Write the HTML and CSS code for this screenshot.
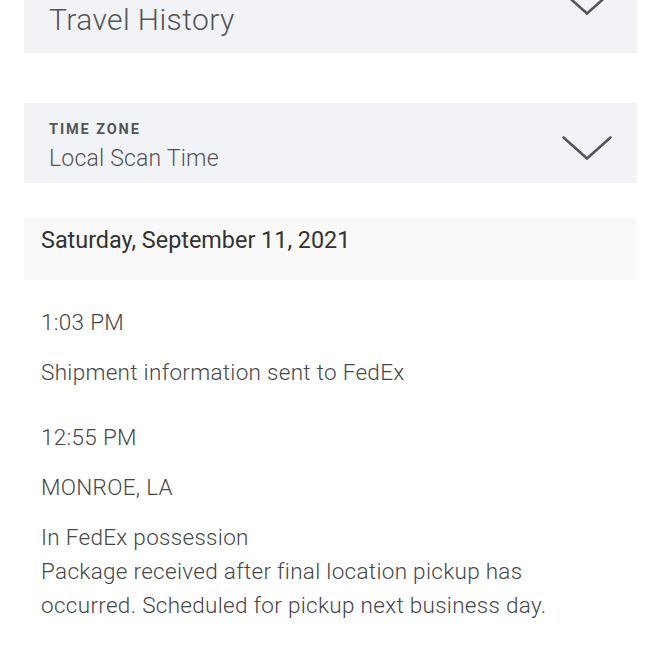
FILE: index.html
```html
<!DOCTYPE html>
<html>
<head>
<meta charset="utf-8">
<link rel="stylesheet" href="styles.css">
</head>
<body>
<div class="page">
  <div class="select select-top">
    <div class="select-text">
      <div class="value value-lg">Travel History</div>
    </div>
    <svg class="chevron chevron-top" width="50" height="24" viewBox="0 0 50 24"><polyline points="1.5,1.5 25,22.5 48.5,1.5" fill="none" stroke="#555" stroke-width="2.6" stroke-linecap="round" stroke-linejoin="miter"/></svg>
  </div>

  <div class="select select-tz">
    <div class="select-text">
      <div class="label">TIME ZONE</div>
      <div class="value value-tz">Local Scan Time</div>
    </div>
    <svg class="chevron chevron-tz" width="50" height="24" viewBox="0 0 50 24"><polyline points="1.5,1.5 25,22.5 48.5,1.5" fill="none" stroke="#555" stroke-width="2.6" stroke-linecap="round" stroke-linejoin="miter"/></svg>
  </div>

  <div class="day-header">Saturday, September 11, 2021</div>

  <div class="events">
    <div class="event">
      <div class="line">1:03 PM</div>
      <div class="line">Shipment information sent to FedEx</div>
    </div>
    <div class="event">
      <div class="line">12:55 PM</div>
      <div class="line">MONROE, LA</div>
      <div class="desc">
        <div class="line">In FedEx possession</div>
        <div class="line">Package received after final location pickup has occurred. Scheduled for pickup next business day.</div>
      </div>
    </div>
  </div>
</div>
</body>
</html>
```
FILE: styles.css
```css
html, body {
  margin: 0;
  padding: 0;
  background: #ffffff;
}
body {
  font-family: Roboto, "Liberation Sans", sans-serif;
  color: #474747;
  overflow: hidden;
}
.page {
  width: 613px;
  margin-left: 24px;
}
.select {
  background: #f2f3f6;
  display: flex;
  justify-content: space-between;
  align-items: flex-start;
  box-sizing: border-box;
}
.select-top {
  margin-top: -30px;
  height: 83.3px;
  padding: 32px 25px 0 25px;
}
.chevron-top {
  margin-top: -11.5px;
}
.select-tz {
  margin-top: 49.7px;
  height: 80px;
  padding: 18.3px 25px 0 25px;
}
.chevron-tz {
  margin-top: 14.5px;
}
.label {
  font-size: 14.5px;
  line-height: 18px;
  font-weight: 700;
  letter-spacing: 1.9px;
  color: #555555;
}
.value {
  font-weight: 300;
  color: #555555;
}
.value-tz {
  margin-top: 6px;
  font-size: 23px;
  line-height: 28px;
  letter-spacing: 0.2px;
}
.value-lg {
  font-size: 30px;
  line-height: 36px;
  letter-spacing: 0.4px;
}
.day-header {
  margin-top: 34.5px;
  height: 62.5px;
  box-sizing: border-box;
  background: #f9f9f9;
  padding: 7.5px 17px 0 17px;
  font-size: 23.4px;
  line-height: 30px;
  font-weight: 400;
  color: #333333;
}
.events {
  margin-top: 24.8px;
  padding-left: 17px;
  display: flex;
  flex-direction: column;
  gap: 31px;
}
.event {
  display: flex;
  flex-direction: column;
  gap: 16px;
  max-width: 520px;
}
.line {
  font-size: 22.5px;
  line-height: 34px;
  font-weight: 300;
  letter-spacing: 0.3px;
}
```
